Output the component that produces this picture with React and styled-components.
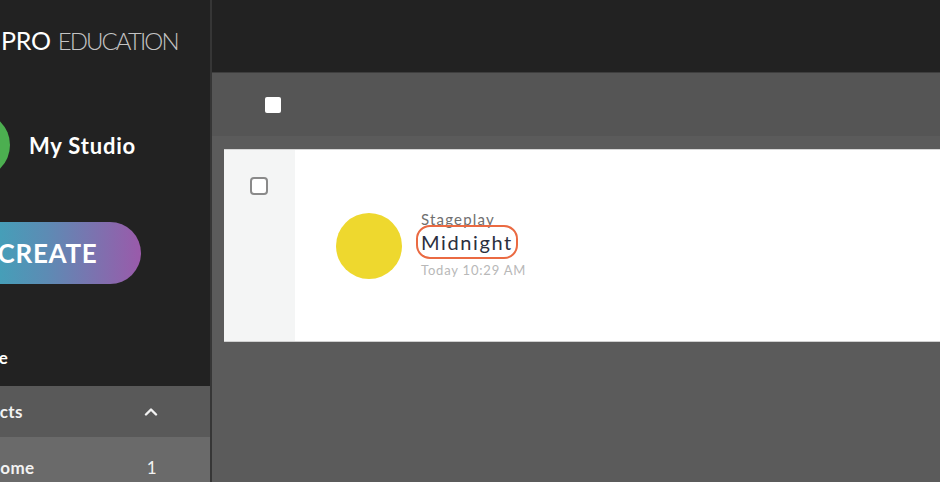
import styled, { createGlobalStyle } from 'styled-components'

const GlobalStyle = createGlobalStyle`
  html, body {
    margin: 0;
    padding: 0;
    background: #5a5a5a;
    font-family: Lato, "Open Sans", sans-serif;
    overflow: hidden;
  }
`

const Page = styled.div`
  display: flex;
  width: 940px;
  height: 482px;
  overflow: hidden;
`

const Sidebar = styled.aside`
  width: 210px;
  flex-shrink: 0;
  background: #222222;
  border-right: 2px solid #363636;
  overflow: hidden;
`

const SideInner = styled.div`
  width: 300px;
  margin-left: -90px;
  display: flex;
  flex-direction: column;
`

const Logo = styled.div`
  height: 80px;
  padding-left: 91px;
  display: flex;
  align-items: center;
  font-size: 24px;
  color: #c4c4c4;
  font-weight: 300;
  letter-spacing: -1.9px;
  span {
    color: #ffffff;
    font-size: 25px;
    font-weight: 400;
    letter-spacing: -0.3px;
    margin-right: 7px;
  }
`

const Studio = styled.div`
  margin-top: 32px;
  display: flex;
  align-items: center;
  gap: 19px;
  padding-left: 34px;
  font-size: 22px;
  font-weight: 700;
  color: #ffffff;
  letter-spacing: 0.8px;
`

const Avatar = styled.div`
  width: 66px;
  height: 66px;
  border-radius: 50%;
  background: #4caf50;
`

const CreateButton = styled.button`
  margin-top: 44px;
  margin-left: 44px;
  width: 187px;
  height: 62px;
  border: none;
  border-radius: 31px;
  background: linear-gradient(90deg, #2fb1bc 0%, #5d8bb4 50%, #9a5aaa 100%);
  color: #ffffff;
  font-family: Lato, sans-serif;
  font-size: 26px;
  font-weight: 700;
  letter-spacing: 0.7px;
`

const NavItem = styled.div`
  margin-top: 60px;
  margin-bottom: 14px;
  height: 28px;
  line-height: 28px;
  padding-left: ${({ $indent }) => $indent}px;
  font-size: 17px;
  font-weight: 700;
  color: #ffffff;
`

const SectionRow = styled.div`
  height: ${({ $h }) => $h}px;
  flex-shrink: 0;
  display: flex;
  align-items: center;
  justify-content: space-between;
  padding-left: ${({ $indent }) => $indent}px;
  padding-right: ${({ $right }) => $right}px;
  background: ${({ $bg }) => $bg};
  color: #f2f2f2;
  font-size: 17px;
  font-weight: 700;
  letter-spacing: 0.4px;
`

const Count = styled.span`
  font-weight: 400;
  font-size: 17px;
`

const Main = styled.main`
  flex: 1;
  display: flex;
  flex-direction: column;
  background: #5b5b5b;
`

const Header = styled.header`
  height: 72px;
  background: #222222;
`

const Toolbar = styled.div`
  height: 63px;
  border-top: 1px solid #3e3e3e;
  background: #555555;
  display: flex;
  align-items: center;
  padding-left: 53px;
`

const SelectAll = styled.div`
  width: 16px;
  height: 16px;
  border-radius: 2px;
  background: #ffffff;
`

const List = styled.div`
  padding: 13px 0 0 12px;
`

const Card = styled.div`
  height: 191px;
  display: flex;
  background: #ffffff;
  border-top: 1px solid #d6d6d6;
  border-bottom: 1px solid #d0d0d0;
`

const CheckCol = styled.div`
  width: 71px;
  background: #f4f5f5;
  padding: 27px 0 0 26px;
  box-sizing: border-box;
`

const Checkbox = styled.div`
  width: 18px;
  height: 18px;
  box-sizing: border-box;
  border: 2px solid #8a8a8a;
  border-radius: 4px;
  background: #ffffff;
`

const Item = styled.div`
  display: flex;
  align-items: center;
  padding: 63px 0 0 41px;
  align-self: flex-start;
`

const Thumb = styled.div`
  width: 66px;
  height: 66px;
  border-radius: 50%;
  background: #eed82e;
  flex-shrink: 0;
`

const Info = styled.div`
  margin-left: 19px;
  margin-top: -3px;
  display: flex;
  flex-direction: column;
`

const Kind = styled.div`
  font-size: 15px;
  color: #6f6f6f;
  letter-spacing: 1.2px;
  line-height: 17px;
`

const Title = styled.div`
  align-self: flex-start;
  margin-top: 2px;
  font-size: 20px;
  color: #2b2f3e;
  letter-spacing: 1.6px;
  line-height: 24px;
  border-radius: 9px;
  outline: 2.5px solid #ea6a42;
  outline-offset: 3px;
`

const Stamp = styled.div`
  margin-top: 9px;
  font-size: 13px;
  color: #b8b8b8;
  line-height: 15px;
  letter-spacing: 0.8px;
`

export default function App() {
  return (
    <Page>
      <GlobalStyle />
      <Sidebar>
        <SideInner>
          <Logo>
            <span>PRO</span>EDUCATION
          </Logo>
          <Studio>
            <Avatar />
            My Studio
          </Studio>
          <CreateButton>CREATE</CreateButton>
          <NavItem $indent={40}>Archive</NavItem>
          <SectionRow $h={51} $bg="#595959" $indent={48} $right={52}>
            Projects
            <svg width="14" height="9" viewBox="0 0 14 9" fill="none">
              <path d="M2 7.5 L7 2.5 L12 7.5" stroke="#f2f2f2" strokeWidth="2.4" strokeLinecap="round" strokeLinejoin="round" />
            </svg>
          </SectionRow>
          <SectionRow $h={60} $bg="#6a6a6a" $indent={77} $right={53}>
            Home
            <Count>1</Count>
          </SectionRow>
        </SideInner>
      </Sidebar>
      <Main>
        <Header />
        <Toolbar>
          <SelectAll />
        </Toolbar>
        <List>
          <Card>
            <CheckCol>
              <Checkbox />
            </CheckCol>
            <Item>
              <Thumb />
              <Info>
                <Kind>Stageplay</Kind>
                <Title>Midnight</Title>
                <Stamp>Today 10:29 AM</Stamp>
              </Info>
            </Item>
          </Card>
        </List>
      </Main>
    </Page>
  )
}
